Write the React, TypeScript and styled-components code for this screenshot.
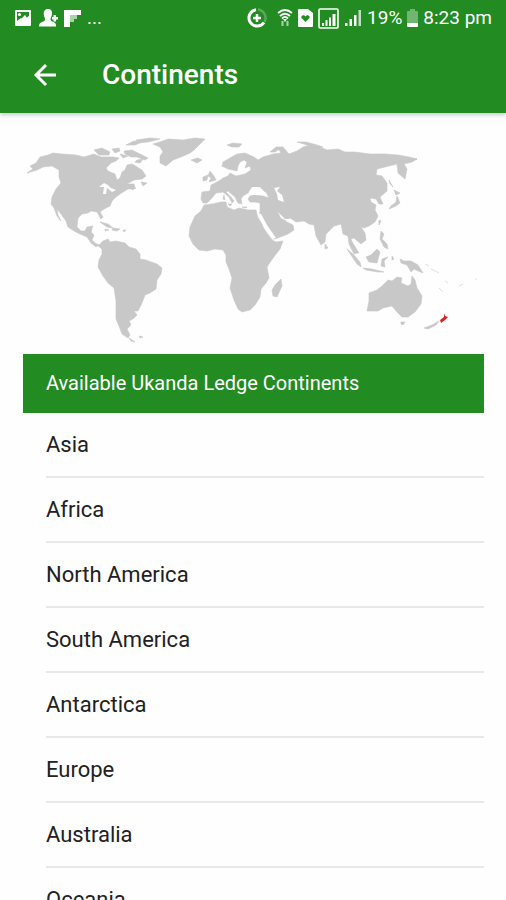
import React from "react";
import styled, { createGlobalStyle } from "styled-components";

const GlobalStyle = createGlobalStyle`
  * { box-sizing: border-box; }
  html, body, #root { margin: 0; height: 100%; }
  body {
    background: #fefefe;
    font-family: Roboto, "Liberation Sans", sans-serif;
    color: #212121;
  }
`;

const Screen = styled.div`
  height: 100vh;
  overflow: hidden;
  display: flex;
  flex-direction: column;
`;

const TopArea = styled.header`
  flex: none;
  background: #228b22;
  color: #fff;
  box-shadow: 0 2px 4px rgba(60, 40, 70, 0.25);
`;

const StatusBar = styled.div`
  display: flex;
  justify-content: space-between;
  align-items: center;
  height: 36px;
  padding: 0 14px;
  font-size: 19px;
  line-height: 24px;
`;

const StatusGroup = styled.div<{ $gap: number }>`
  display: flex;
  align-items: center;
  gap: ${(p) => p.$gap}px;
  white-space: nowrap;
`;

const Glyph = styled.svg`
  display: block;
  flex: none;
`;

const AppBar = styled.div`
  display: flex;
  align-items: center;
  height: 77px;
  padding: 0 28px;
  gap: 40px;
`;

const BackButton = styled.button`
  display: flex;
  align-items: center;
  justify-content: center;
  width: 34px;
  height: 40px;
  padding: 0;
  border: 0;
  background: none;
  color: inherit;
  cursor: pointer;
`;

const Title = styled.h1`
  margin: 0;
  font-size: 28px;
  line-height: 32px;
  font-weight: 500;
`;

const Content = styled.main`
  flex: 1;
  min-height: 0;
  overflow: hidden;
  padding: 19px 22px 0 23px;
`;

const WorldMap = styled.svg`
  display: block;
  width: 100%;
  height: auto;
  margin-bottom: 4px;
`;

const ListHeader = styled.h2`
  margin: 0;
  padding: 0 23px;
  background: #228b22;
  color: #fff;
  font-size: 20px;
  line-height: 59px;
  font-weight: 400;
`;

const List = styled.ul`
  list-style: none;
  margin: 0;
  padding: 0 0 0 23px;
`;

const Row = styled.li`
  border-bottom: 2px solid #e8e8e8;
`;

const RowButton = styled.button`
  display: block;
  width: 100%;
  padding: 0;
  border: 0;
  background: none;
  color: inherit;
  font-family: inherit;
  font-size: 22px;
  line-height: 63px;
  text-align: left;
  cursor: pointer;
`;

const continents = [
  "Asia",
  "Africa",
  "North America",
  "South America",
  "Antarctica",
  "Europe",
  "Australia",
  "Oceania",
];

const PictureIcon = () => (
  <Glyph width="18" height="18" viewBox="0 0 18 18" aria-hidden="true">
    <path fill="#fff" fillRule="evenodd" d="M2 1h14q1 0 1 1v14q0 1-1 1H2q-1 0-1-1V2q0-1 1-1zM3 3v9l4-3 3 2 5-4V3z" />
    <circle cx="5.5" cy="5.5" r="1.6" fill="#fff" />
    <path fill="#fff" d="M8 9l3-3 2 3 2-2v5H6z" />
  </Glyph>
);

const PersonIcon = () => (
  <Glyph width="20" height="18" viewBox="0 0 20 18" aria-hidden="true">
    <path fill="#fff" d="M10 0c3 0 4.500 2 4 5-.3 2.500-1.300 3.500-1.500 5 0 2 1 2.500 3 3 2 .7 2.500 2 2.500 4.500H1c0-2.500 1-3.800 3-4.500s3-1 3-3C6.800 8.500 6 7.500 5.700 5 5.500 2 7 0 10 0z" />
    <path fill="#fff" d="M15.500 6h2.500v2h2v2.500h-2v2h-2.500v-2h-1.500V8h1.500z" />
  </Glyph>
);

const FlagIcon = () => (
  <Glyph width="17" height="17" viewBox="0 0 17 17" aria-hidden="true">
    <path fill="#fff" d="M0 0h17v5h-5v0H6v12H0z" />
    <path fill="#a9d3a9" d="M6 5h7v4h-3v3H6z" />
  </Glyph>
);

const DataSaverIcon = () => (
  <Glyph width="20" height="20" viewBox="0 0 20 20" fill="none" aria-hidden="true">
    <path stroke="#5aa85a" strokeWidth="2.500" d="M11 1.500A8.500 8.500 0 0 1 17.500 14" />
    <path stroke="#fff" strokeWidth="3" d="M9 1.800A8.200 8.200 0 1 0 17 14.500" />
    <path stroke="#fff" strokeWidth="2.500" d="M10 6v8M6 10h8" />
  </Glyph>
);

const WifiIcon = () => (
  <Glyph width="16" height="20" viewBox="0 0 16 20" fill="none" stroke="#fff" aria-hidden="true">
    <path strokeWidth="1.800" d="M1 5q7-6 14 0M3 8q5-4.500 10 0M5 10.500q3-3 6 0" />
    <path fill="#fff" stroke="none" d="M6 11h4l-2 3z" />
    <path stroke="#a9d3a9" strokeWidth="2" d="M5.500 13v5M10.500 13v5" />
  </Glyph>
);

const SimHeartIcon = () => (
  <Glyph width="15" height="18" viewBox="0 0 15 18" aria-hidden="true">
    <path fill="#fff" d="M1 0h9l5 4v13q0 1-1 1H1q-1 0-1-1V1q0-1 1-1z" />
    <path fill="#228b22" d="M7.500 13L3.500 9C2.500 6.500 6 5 7.500 7.500 9 5 12.500 6.500 11.500 9z" />
  </Glyph>
);

const BoxedSignalIcon = () => (
  <Glyph width="21" height="21" viewBox="0 0 21 21" aria-hidden="true">
    <rect x="1" y="1" width="19" height="19" rx="1" fill="none" stroke="#fff" strokeWidth="1.600" />
    <path fill="#fff" d="M4 15h2v3H4zM7.500 12h2v6h-2zM11 9.500h2V18h-2zM14.500 6h3v12h-3z" />
  </Glyph>
);

const SignalIcon = () => (
  <Glyph width="18" height="18" viewBox="0 0 18 18" aria-hidden="true">
    <path fill="#fff" d="M1 14h2.500v3H1zM5.500 10h2.500v7H5.500zM10 6h2.500v11H10z" />
    <path fill="#bfe0bf" d="M14.500 1H17v16h-2.500z" />
  </Glyph>
);

const BatteryIcon = () => (
  <Glyph width="11" height="18" viewBox="0 0 11 18" aria-hidden="true">
    <path fill="#72b572" d="M3 0h5v2h2q1 0 1 1v11H0V3q0-1 1-1h2z" />
    <path fill="#fff" d="M0 14h11v3q0 1-1 1H1q-1 0-1-1z" />
  </Glyph>
);

const BackArrow = () => (
  <Glyph width="24" height="24" viewBox="0 0 24 24" fill="none" stroke="currentColor" strokeWidth="3" aria-hidden="true">
    <path d="M23 12H3M13 2L3 12l10 10" />
  </Glyph>
);

const landmasses = [
  // North America
  "M27 173L33 169 30 166 36 163 40 157 48 155 53 153 62 154 76 155 84 157 94 154 101 157 113 157 119 158 116 161 111 163 106 168 108 171 115 174 117 180 120 178 122 172 125 170 127 165 132 164 137 167 142 170 146 176 142 179 134 180 127 184 134 184 135 188 128 189 120 194 116 197 112 201 110 206 104 209 100 212 103 217 101 219 97 212 91 211 88 213 82 214 78 218 77 227 81 231 85 231 87 227 93 226 91 232 94 235 92 240 95 243 99 245 96 247 91 243 87 237 80 234 74 231 68 227 66 221 61 214 57 209 58 215 61 221 57 216 54 208 51 204 52 197 56 189 61 183 59 177 59 170 52 166 43 167 37 170Z",
  // Canadian Arctic islands
  "M94 150L102 148 110 152 109 155 99 155zM112 149L119 148 120 151 115 153zM124 151L132 150 140 154 148 158 145 160 137 157 131 157 125 154zM126 145L134 141 142 142 135 145zM136 140L150 138 160 139 148 142 138 143zM120 154L128 156 123 158zM137 160L143 159 140 163 135 162zM141 182L147 183 143 186zM131 187L136 188 132 190z",
  // Greenland and Iceland
  "M153 144L160 142 168 139 183 140 195 138 205 139 199 145 194 150 190 153 181 157 173 160 166 166 160 163 160 156 163 152 160 147zM191 160L198 158 202 160 197 163z",
  // Caribbean
  "M100 222L108 224 113 228 107 227zM113 228L120 229 117 231 112 230zM105 229L109 230 105 231zM123 230L126 230 124 232z",
  // South America
  "M98 246L103 241 108 239 110 242 116 241 125 243 129 247 136 249 140 254 140 259 146 260 151 262 157 264 162 268 161 274 157 280 156 289 150 293 145 295 142 303 138 311 134 311 137 315 133 319 129 321 131 325 127 329 130 335 128 338 122 334 119 326 116 319 116 301 114 288 108 283 103 276 98 267 99 260 102 254 102 249zM129 338L135 342 131 341zM139 336L143 337 140 338z",
  // Africa
  "M204 205L212 204 221 202 226 202 227 207 234 210 239 208 248 210 256 210 258 218 262 224 266 232 272 240 276 242 283 241 280 249 273 258 267 267 269 278 266 283 261 289 260 297 255 305 250 310 242 312 238 309 234 300 230 288 232 278 229 269 226 262 226 255 223 250 215 249 207 251 199 250 193 244 189 236 190 227 195 216 201 211zM281 279L282 286 277 297 273 296 272 290 275 285z",
  // Europe and Asia
  "M203 203L201 199 202 192 210 191 211 185 219 181 223 178 228 176 230 173 236 176 245 174 251 170 250 166 245 168 247 162 244 160 240 162 238 166 237 171 233 170 228 169 222 166 223 162 230 158 237 154 245 153 254 157 258 160 263 157 270 155 273 154 281 153 278 148 283 147 289 154 297 151 303 147 310 145 320 147 327 150 338 149 345 152 355 152 370 154 385 154 398 155 409 157 417 159 412 162 404 164 407 169 405 179 398 173 397 164 389 166 377 169 376 175 382 176 387 183 387 191 380 197 383 204 379 204 376 199 370 198 371 202 376 205 375 210 378 216 375 222 369 226 364 228 361 227 365 233 366 240 361 244 354 238 351 239 354 247 357 253 354 254 349 244 348 236 343 234 341 224 334 226 326 234 325 242 321 245 316 236 314 225 309 224 304 221 296 222 290 218 285 221 293 225 294 230 288 234 275 239 272 239 265 229 259 217 260 211 260 203 255 202 250 202 248 199 250 196 254 195 263 196 269 198 266 192 260 190 261 186 255 190 251 188 248 193 243 196 241 199 242 204 238 203 235 197 228 191 226 192 231 197 234 201 232 203 229 197 223 192 216 193 212 198 207 203z",
  // Sicily, Corsica and Crete
  "M228 204L232 204 230 206zM224 195L225 200 223 199zM242 207L247 207 246 208z",
  // British Isles and Arctic islands
  "M210 171L214 176 216 180 209 182 211 178 208 176zM203 177L208 175 207 180 203 181zM227 145L233 143 242 144 239 147 232 147zM270 152L276 147 283 147 275 152zM297 142L306 142 317 145 323 147 312 147 304 144zM416 159L417 159 413 159z",
  // Japan, Taiwan, the Philippines and Sri Lanka
  "M389 180L393 187 390 184zM394 190L400 193 396 195zM397 196L400 203 396 206 389 209 391 206 396 202zM379 220L381 221 379 225zM381 231L384 234 382 239 387 244 388 249 384 247 380 239zM325 244L328 248 325 249z",
  // Southeast Asia and New Guinea
  "M347 249L354 255 360 262 361 267 357 264zM352 242L359 253 356 253 352 247zM363 268L372 269 384 272 378 272 366 270zM377 249L380 252 377 263 369 262 366 257 371 255zM382 259L388 257 384 261 385 267 381 266zM400 259L404 261 411 261 418 265 423 273 418 271 414 269 411 272 407 265 401 263zM392 256L394 259 392 260z",
  // Australia and Tasmania
  "M367 311L369 301 369 293 377 290 382 286 388 280 392 281 397 277 402 278 401 283 408 286 411 284 412 276 415 280 417 288 422 296 421 304 415 312 408 317 402 317 397 312 392 306 383 308 378 311zM401 322L405 322 403 325 401 324z",
  // Southern New Zealand
  "M424 328L432 325 439 321 436 325 428 329z",
];

// Solomon Islands, New Caledonia and Fiji
const pacificIslands =
  "M425 264L429 266M431 269L439 273M439 288L443 292M445 281L448 283M459 286L463 284M475 279L477 279";

const waters = [
  // Great Lakes
  "M99 187L104 183 108 185 111 188 116 190 112 192 107 188 106 194 103 194 104 187z",
  // Black Sea and Caspian Sea
  "M249 195L252 187 258 187 262 189 267 195 259 195zM274 188L280 187 277 191 282 195 284 202 278 200 277 194z",
  // Red Sea and Persian Gulf
  "M257 213L261 214 267 225 276 238 272 239 264 228zM278 212L285 219 291 219 287 221 281 218z",
];

const App = () => (
  <>
    <GlobalStyle />
    <Screen>
      <TopArea>
        <StatusBar>
          <StatusGroup $gap={6}>
            <PictureIcon />
            <PersonIcon />
            <FlagIcon />
            <span>...</span>
          </StatusGroup>
          <StatusGroup $gap={5}>
            <DataSaverIcon />
            <span />
            <WifiIcon />
            <SimHeartIcon />
            <BoxedSignalIcon />
            <SignalIcon />
            <span>19%</span>
            <BatteryIcon />
            <span>8:23 pm</span>
          </StatusGroup>
        </StatusBar>
        <AppBar>
          <BackButton type="button" aria-label="Back">
            <BackArrow />
          </BackButton>
          <Title>Continents</Title>
        </AppBar>
      </TopArea>
      <Content>
        <WorldMap viewBox="23 132 461 218" role="img" aria-label="World map">
          <path d={landmasses.join("")} fill="#c8c8c8" stroke="#c8c8c8" strokeWidth="0.600" strokeLinejoin="round" />
          <path d={waters.join("")} fill="#fefefe" />
          <path d={pacificIslands} fill="none" stroke="#e0e0e0" />
          <path d="M444 313L445 316 448 317 445 320 441 323 440 320 444 317z" fill="#e02020" />
        </WorldMap>
        <ListHeader>Available Ukanda Ledge Continents</ListHeader>
        <List>
          {continents.map((name) => (
            <Row key={name}>
              <RowButton type="button">{name}</RowButton>
            </Row>
          ))}
        </List>
      </Content>
    </Screen>
  </>
);

export default App;
